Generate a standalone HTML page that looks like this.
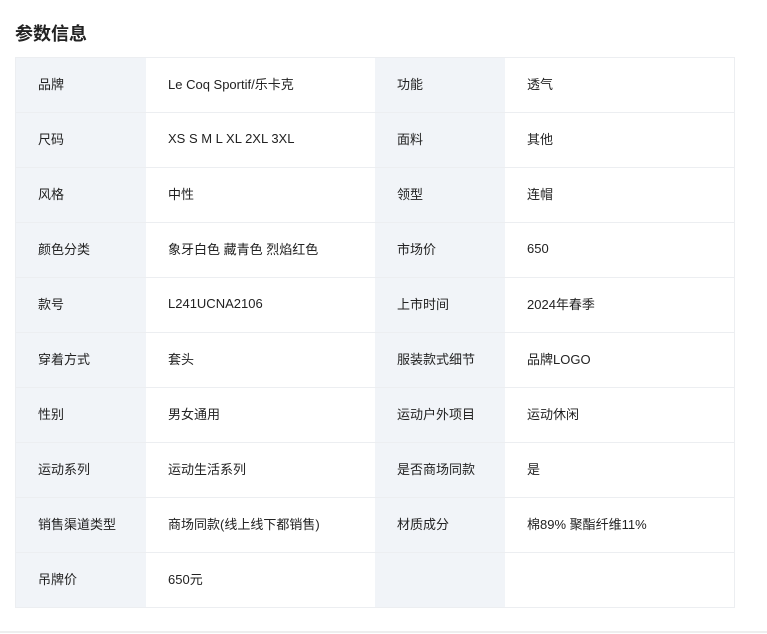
<!DOCTYPE html>
<html><head><meta charset="utf-8"><style>
body{margin:0;background:#fff;width:767px;height:634px;position:relative;overflow:hidden;font-family:"Liberation Sans","Noto Sans CJK SC",sans-serif;color:#222;}
h2{position:absolute;left:15px;top:22px;margin:0;font-size:18px;font-weight:bold;color:#222;line-height:24px;}
table{position:absolute;left:15px;top:57px;width:720px;border-collapse:collapse;border:1px solid #eceef1;border-radius:4px;font-size:13px;}
td{height:51px;padding:0 0 3px 0;border-bottom:1px solid #eceef1;vertical-align:middle;}
tr:last-child td{border-bottom:none;}
td.l{background:#f1f4f8;width:108px;padding-left:22px;}
td.v{background:#fff;width:207px;padding-left:22px;}
.line{position:absolute;left:0;top:631px;width:767px;height:2px;background:#eee;}
</style></head><body>
<h2>参数信息</h2>
<table>
<tr><td class="l">品牌</td><td class="v">Le Coq Sportif/乐卡克</td><td class="l">功能</td><td class="v">透气</td></tr>
<tr><td class="l">尺码</td><td class="v">XS S M L XL 2XL 3XL</td><td class="l">面料</td><td class="v">其他</td></tr>
<tr><td class="l">风格</td><td class="v">中性</td><td class="l">领型</td><td class="v">连帽</td></tr>
<tr><td class="l">颜色分类</td><td class="v">象牙白色 藏青色 烈焰红色</td><td class="l">市场价</td><td class="v">650</td></tr>
<tr><td class="l">款号</td><td class="v">L241UCNA2106</td><td class="l">上市时间</td><td class="v">2024年春季</td></tr>
<tr><td class="l">穿着方式</td><td class="v">套头</td><td class="l">服装款式细节</td><td class="v">品牌LOGO</td></tr>
<tr><td class="l">性别</td><td class="v">男女通用</td><td class="l">运动户外项目</td><td class="v">运动休闲</td></tr>
<tr><td class="l">运动系列</td><td class="v">运动生活系列</td><td class="l">是否商场同款</td><td class="v">是</td></tr>
<tr><td class="l">销售渠道类型</td><td class="v">商场同款(线上线下都销售)</td><td class="l">材质成分</td><td class="v">棉89% 聚酯纤维11%</td></tr>
<tr><td class="l">吊牌价</td><td class="v">650元</td><td class="l"></td><td class="v"></td></tr>
</table>
<div class="line"></div>
</body></html>
